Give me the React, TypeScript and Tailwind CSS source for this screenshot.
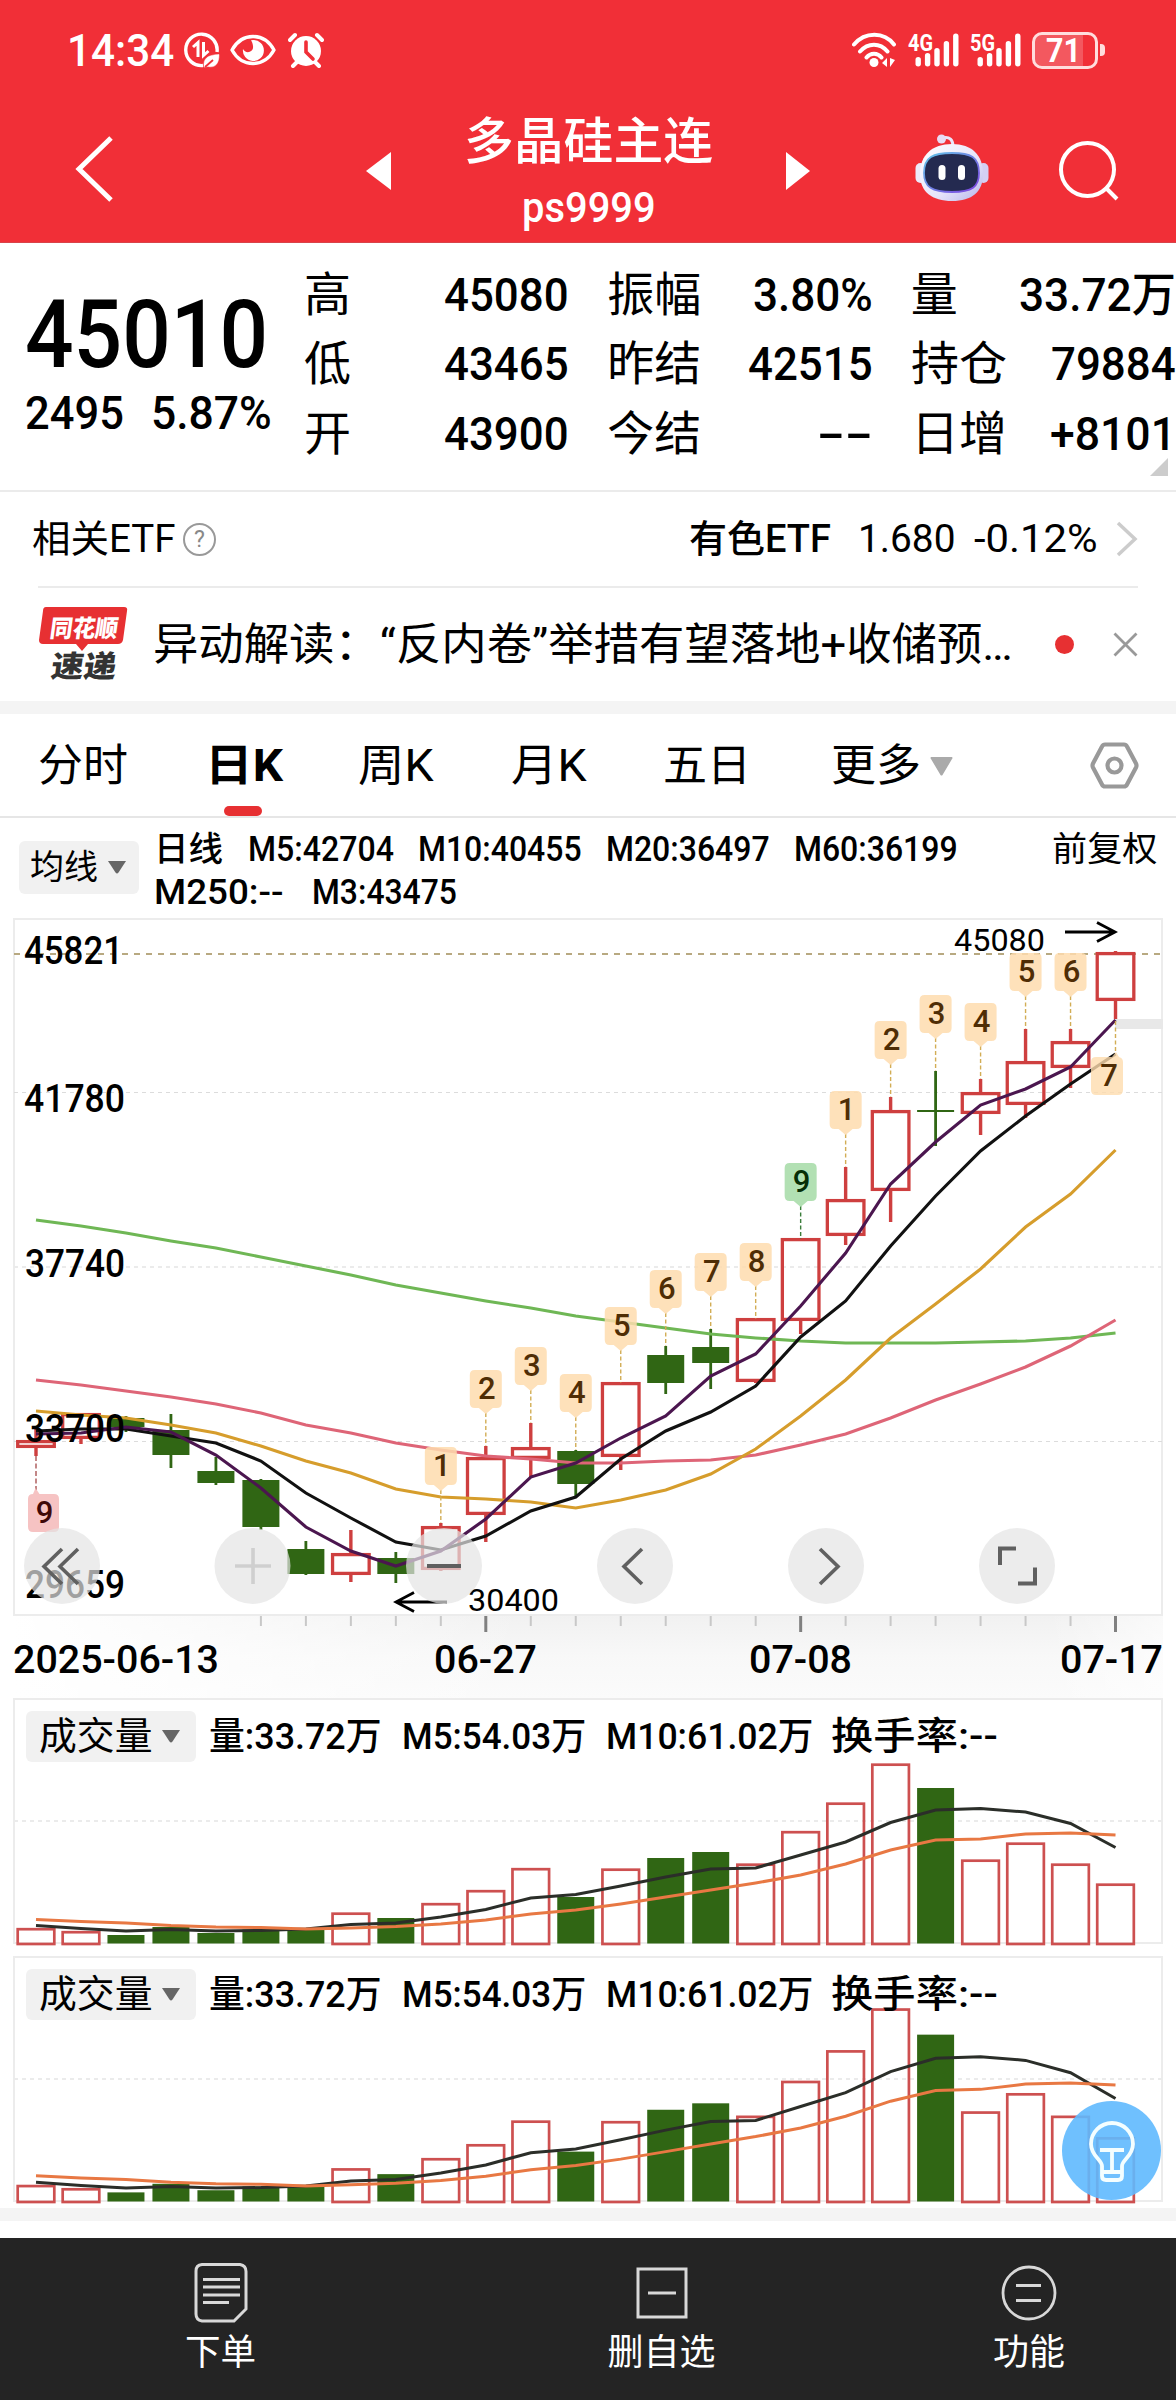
import React, { useLayoutEffect, useRef } from 'react';
import clsx from 'clsx';

// Candle describes one day: body top/bottom and wick high/low in chart units
interface Candle {
  up: boolean;
  top: number;
  bottom: number;
  high: number;
  low: number;
}

interface Badge {
  day: number;
  label: string;
  y: number;
}

const FIRST_X = 36;
const STEP = 44.98;
const dayX = (i: number) => FIRST_X + i * STEP;

const toCandle = ([up, top, bottom, high, low]: number[]): Candle => ({ up: up === 1, top, bottom, high, low });

const candles: Candle[] = [
  [1, 1440, 1448, 1428, 1456],
  [1, 1413, 1439, 1413, 1444],
  [0, 1418, 1427, 1416, 1432],
  [0, 1430, 1455, 1414, 1468],
  [0, 1471, 1483, 1457, 1485],
  [0, 1480, 1527, 1479, 1530],
  [0, 1549, 1574, 1541, 1575],
  [1, 1553, 1575, 1530, 1582],
  [0, 1558, 1574, 1552, 1583],
  [1, 1526, 1570, 1523, 1571],
  [1, 1457, 1515, 1446, 1542],
  [1, 1447, 1459, 1423, 1477],
  [0, 1451, 1484, 1450, 1496],
  [1, 1382, 1457, 1382, 1470],
  [0, 1355, 1383, 1346, 1394],
  [0, 1347, 1363, 1329, 1389],
  [1, 1318, 1382, 1318, 1383],
  [1, 1238, 1321, 1238, 1334],
  [1, 1199, 1236, 1167, 1245],
  [1, 1110, 1191, 1097, 1222],
  [0, 1110, 1112, 1071, 1146],
  [1, 1092, 1114, 1079, 1135],
  [1, 1061, 1105, 1029, 1118],
  [1, 1041, 1068, 1029, 1088],
  [1, 952, 1001, 951, 1019],
].map(toCandle);

const averages = [
  { color: '#6fb755', data: [1220, 1226, 1233, 1241, 1248, 1257, 1266, 1275, 1285, 1293, 1301, 1308, 1316, 1322, 1328, 1334, 1338, 1341, 1343, 1343, 1343, 1342, 1341, 1338, 1333] },
  { color: '#de6577', data: [1380, 1385, 1391, 1397, 1404, 1413, 1425, 1433, 1443, 1450, 1456, 1459, 1463, 1463, 1461, 1460, 1455, 1445, 1434, 1418, 1400, 1384, 1367, 1346, 1320] },
  { color: '#d69d2c', data: [1411, 1415, 1418, 1425, 1433, 1446, 1461, 1473, 1489, 1497, 1499, 1502, 1508, 1500, 1490, 1474, 1449, 1416, 1380, 1338, 1304, 1269, 1227, 1194, 1150] },
  { color: '#111111', data: [1431, 1429, 1429, 1436, 1443, 1461, 1493, 1518, 1542, 1550, 1536, 1511, 1497, 1459, 1431, 1412, 1386, 1337, 1301, 1246, 1196, 1151, 1116, 1084, 1054] },
  { color: '#4b164f', data: [1434, 1433, 1427, 1432, 1455, 1488, 1527, 1551, 1566, 1551, 1519, 1477, 1463, 1438, 1416, 1376, 1354, 1306, 1253, 1184, 1142, 1105, 1089, 1067, 1020] },
];

const badges: Badge[] = [
  { day: 9, label: '1', y: 1447 },
  { day: 10, label: '2', y: 1370 },
  { day: 11, label: '3', y: 1347 },
  { day: 12, label: '4', y: 1374 },
  { day: 13, label: '5', y: 1307 },
  { day: 14, label: '6', y: 1270 },
  { day: 15, label: '7', y: 1253 },
  { day: 16, label: '8', y: 1243 },
  { day: 17, label: '9', y: 1163 },
  { day: 18, label: '1', y: 1091 },
  { day: 19, label: '2', y: 1021 },
  { day: 20, label: '3', y: 995 },
  { day: 21, label: '4', y: 1003 },
  { day: 22, label: '5', y: 953 },
  { day: 23, label: '6', y: 953 },
];

// Volume heights above the base line
const volumes = [15.5, 12.5, 8.5, 16.5, 10.5, 14, 14, 31, 25.5, 40.5, 53.5, 75.5, 46.5, 75, 85.5, 91.5, 80, 112.5, 141, 180, 155.5, 84, 101, 80, 60];
const volumeFalls = [2, 3, 4, 5, 6, 8, 12, 14, 15, 20];
const volumeM5 = [18, 15, 12.5, 14, 12.5, 13, 14.5, 19, 20.5, 26.5, 34, 45.5, 49, 57.5, 66.5, 74.5, 75.5, 88.5, 101.5, 121, 133.5, 135, 131.5, 120, 96];
const volumeM10 = [24, 22, 20.5, 18, 16.5, 16, 14.5, 15.5, 17, 19.5, 23.5, 29.5, 33.5, 39.5, 46.5, 53.5, 60.5, 68.5, 79.5, 93.5, 103.5, 104.5, 109.5, 110.5, 108.5];

const quotes = [
  [['高', 'w-[47px]', '45080', 'w-[125px]'], ['振幅', 'w-[94px]', '3.80%', 'w-[120px]'], ['量', 'w-[47px]', '33.72万', 'w-[157px]']],
  [['低', 'w-[47px]', '43465', 'w-[125px]'], ['昨结', 'w-[94px]', '42515', 'w-[125px]'], ['持仓', 'w-[96px]', '79884', 'w-[125px]']],
  [['开', 'w-[47px]', '43900', 'w-[125px]'], ['今结', 'w-[94px]', '--', 'w-[56px]'], ['日增', 'w-[96px]', '+8101', 'w-[126px]']],
];

const points = (data: number[], y = (v: number) => v) => data.map((v, i) => `${dayX(i)},${y(v)}`).join(' ');

// Fit squeezes or stretches a single line of text to the width of its box
const Fit: React.FC<{ className: string; children: string }> = ({ className, children }) => {
  const ref = useRef<HTMLSpanElement>(null);

  useLayoutEffect(() => {
    const el = ref.current;
    if (!el || !el.parentElement) return;
    el.style.transform = `scaleX(${el.parentElement.clientWidth / el.offsetWidth})`;
  }, [children]);

  return (
    <span className={clsx('block shrink-0 leading-none', className)}>
      <span ref={ref} className="inline-block origin-left whitespace-nowrap leading-none align-top">{children}</span>
    </span>
  );
};

const Signal: React.FC<{ label: string }> = ({ label }) => (
  <svg className="overflow-visible" width="52" height="36" viewBox="0 0 52 36">
    <text x="0" y="19" fontSize="24" fontWeight="700" fill="#fff" textLength="25" lengthAdjust="spacingAndGlyphs">{label}</text>
    {[9.5, 13.5, 18.5, 25.5, 33].map((h, i) => (
      <rect key={i} x={7.5 + i * 9.4} y={34.5 - h} width="5.4" height={h} rx="2.7" fill="#fff" />
    ))}
  </svg>
);

const StatusBar = () => (
  <div className="flex h-[100px] items-center pl-[67px] pr-[71px]">
    <Fit className="w-[107px] text-[45px] font-medium">14:34</Fit>
    <svg className="ml-[10px]" width="36" height="36" viewBox="0 0 36 36" fill="none" stroke="#fff">
      <path d="M19 33.500A15.700 15.700 0 1 1 33 20" strokeWidth="3.400" />
      <path d="M9 15l5-4.500V25M19.500 10v13.500l5-4.500" strokeWidth="3" />
      <path d="M20 35c-1-9 4-12 15-12.500C35 32 31 36 24 34.500z" fill="#fff" strokeWidth="0.500" />
      <path d="M21 35l8-7" stroke="#f12f37" strokeWidth="1.800" />
    </svg>
    <svg className="ml-[10px]" width="46" height="32" viewBox="0 0 46 32">
      <path d="M2 16C12-2 34-2 44 16 34 34 12 34 2 16z" fill="none" stroke="#fff" strokeWidth="3.400" strokeLinejoin="round" />
      <path d="M23 6a10.500 10.500 0 1 1-10 9c2 5 11 4 10-3-.3-3-1-4-2-5.800z" fill="#fff" />
    </svg>
    <svg className="ml-[12px]" width="36" height="36" viewBox="0 0 36 36">
      <circle cx="18" cy="19" r="15" fill="#fff" />
      <path d="M2 8l5-5M34 8l-5-5M5 34l5-5M31 34l-5-5" stroke="#fff" strokeWidth="4" strokeLinecap="round" />
      <path d="M18 10v10l7 7" fill="none" stroke="#f12f37" strokeWidth="3.600" strokeLinecap="round" />
    </svg>
    <svg className="ml-auto mr-[11px]" width="45" height="36" viewBox="0 0 45 36" fill="none" stroke="#fff" strokeWidth="4" strokeLinecap="round">
      <path d="M2 12.500c11-13 30-13 40 0M8 19.500c8-9 20-9 27.500 0M14.500 25.500c4-5 11-5 15 0" />
      <circle cx="22" cy="30.500" r="4.500" fill="#fff" stroke="none" />
      <path d="M35 26v9l-5-4zM38 26v9l5-7z" fill="#fff" stroke="none" />
    </svg>
    <Signal label="4G" />
    <div className="w-[10px]" />
    <Signal label="5G" />
    <div className="relative ml-[10px] flex h-[37px] w-[66px] items-center rounded-[10px] border-[3px] border-[#fdd]">
      <div className="absolute inset-y-0 left-0 w-[48px] rounded-l-[7px] bg-white/20" />
      <Fit className="relative ml-[11px] w-[35px] text-[33px] font-bold text-white">71</Fit>
    </div>
    <div className="ml-[2px] h-[12px] w-[5px] rounded-r-[4px] bg-[#fdd]" />
  </div>
);

const Robot = () => (
  <svg width="74" height="68" viewBox="0 0 74 68">
    <defs>
      <linearGradient id="shell" x1="0" y1="0" x2="1" y2="1">
        <stop offset="0" stopColor="#ffffff" />
        <stop offset="0.6" stopColor="#e6e4fa" />
        <stop offset="1" stopColor="#b6b4ea" />
      </linearGradient>
      <linearGradient id="rim" x1="0" y1="0" x2="1" y2="1">
        <stop offset="0" stopColor="#62c6e8" />
        <stop offset="1" stopColor="#7d3fe0" />
      </linearGradient>
    </defs>
    <path d="M27 4c8-2 11 2 11 9" fill="none" stroke="#eae6fa" strokeWidth="3" />
    <circle cx="26.500" cy="5" r="4.500" fill="#e8dcf4" />
    <rect x="0.500" y="29" width="10" height="20" rx="5" fill="#eceafa" />
    <rect x="63.500" y="29" width="10" height="20" rx="5" fill="#d4cff4" />
    <path d="M37 10c20 0 31 11 31 30 0 18-11 27-31 27S5 58 5 40c0-19 12-30 32-30z" fill="url(#shell)" />
    <path d="M37 19c19 0 27 4 27 20 0 14-7 19-27 19S9 53 9 39c0-16 9-20 28-20z" fill="#242a50" stroke="url(#rim)" strokeWidth="1.800" />
    <rect x="23.500" y="31" width="7" height="15" rx="3.500" fill="#fff" />
    <rect x="43" y="31" width="7" height="15" rx="3.500" fill="#fff" />
  </svg>
);

const TitleBar = () => (
  <div className="flex h-[143px] pl-[75px] pr-[55px]">
    <svg className="mt-[36px]" width="40" height="66" viewBox="0 0 40 66" fill="none" stroke="#fff" strokeWidth="5">
      <path d="M36 2L4 33l32 31" />
    </svg>
    <svg className="ml-[251px] mt-[52px]" width="25" height="38" viewBox="0 0 25 38" fill="#fff">
      <path d="M25 0v38L0 19z" />
    </svg>
    <div className="ml-[73px] flex w-[249px] flex-col items-center text-white">
      <Fit className="mt-[17px] w-[249px] text-[50px] font-medium">多晶硅主连</Fit>
      <Fit className="mt-[20px] w-[134px] text-[42px] font-medium">ps9999</Fit>
    </div>
    <svg className="ml-[73px] mt-[52px]" width="24" height="38" viewBox="0 0 24 38" fill="#fff">
      <path d="M0 0v38l24-19z" />
    </svg>
    <div className="ml-[105px] mt-[34px]"><Robot /></div>
    <svg className="ml-[69px] mt-[40px]" width="62" height="61" viewBox="0 0 62 61" fill="none" stroke="#fff" strokeWidth="4">
      <circle cx="29.500" cy="29.500" r="26.500" />
      <path d="M48 48l11 11" />
    </svg>
  </div>
);

const QuotePanel = () => (
  <div className="relative flex h-[249px] border-b-2 border-[#ebebeb]">
    <div className="w-[304px] shrink-0 pl-[25px] font-medium">
      <Fit className="mt-[44px] w-[243px] text-[95px]">45010</Fit>
      <div className="mt-[7px] flex">
        <Fit className="w-[99px] text-[47px]">2495</Fit>
        <Fit className="ml-[27px] w-[121px] text-[47px]">5.87%</Fit>
      </div>
    </div>
    <div className="mt-[17px] grid h-[208px] w-[872px] grid-cols-3 grid-rows-3 gap-x-[38px]">
      {quotes.flat().map(([label, labelWidth, value, valueWidth]) => (
        <div key={label} className="flex items-center justify-between text-[47px]">
          <Fit className={labelWidth}>{label}</Fit>
          <Fit className={clsx('font-medium', valueWidth)}>{value}</Fit>
        </div>
      ))}
    </div>
    <svg className="absolute bottom-[14px] right-[8px]" width="18" height="18" viewBox="0 0 18 18">
      <path d="M18 0v18H0z" fill="#ccc" />
    </svg>
  </div>
);

const EtfRow = () => (
  <div className="ml-[38px] flex h-[96px] w-[1100px] items-center border-b-2 border-[#ebebeb] text-[38px]">
    <Fit className="-ml-[6px] w-[144px]">相关ETF</Fit>
    <div className="ml-[7px] flex size-[33px] items-center justify-center rounded-full border-2 border-[#999] text-[23px] leading-none text-[#888]">?</div>
    <Fit className="ml-auto w-[142px] font-medium">有色ETF</Fit>
    <Fit className="ml-[27px] w-[97px]">1.680</Fit>
    <Fit className="ml-[19px] w-[123px]">-0.12%</Fit>
    <svg className="ml-[19px]" width="22" height="36" viewBox="0 0 22 36" fill="none" stroke="#ccc" strokeWidth="3.500">
      <path d="M2 2l17 16L2 34" />
    </svg>
  </div>
);

const NewsRow = () => (
  <div className="flex h-[113px] items-center pl-[38px] pr-[38px]">
    <svg className="-mt-[1px] shrink-0" width="92" height="76" viewBox="0 0 92 76">
      <path d="M8 1h78q4 0 3 4l-4 29q-1 4-5 4H50l-6 7-6-7H5q-4 0-4-4L5 5q0-4 3-4z" fill="#e73032" />
      <text transform="translate(11 31) skewX(-8)" fontSize="24" fontWeight="900" fill="#fff" textLength="68" lengthAdjust="spacingAndGlyphs">同花顺</text>
      <text transform="translate(12 71) skewX(-8)" fontSize="30" fontWeight="900" fill="#333" textLength="65" lengthAdjust="spacingAndGlyphs">速递</text>
    </svg>
    <Fit className="ml-[23px] w-[860px] text-[44px]">异动解读：“反内卷”举措有望落地+收储预…</Fit>
    <div className="ml-auto size-[19px] rounded-full bg-[#e73032]" />
    <svg className="ml-[39px]" width="25" height="25" viewBox="0 0 25 25" stroke="#999" strokeWidth="2.800">
      <path d="M1.500 1.500l22 22M23.500 1.500l-22 22" />
    </svg>
  </div>
);

const Tabs = () => (
  <div className="flex h-[104px] items-center border-b-2 border-[#e6e6e6] pl-[38px] pr-[37px] pt-[2px] text-[44px]">
    <Fit className="w-[90px]">分时</Fit>
    <div className="relative ml-[77px] w-[78px]">
      <Fit className="w-[78px] font-bold">日K</Fit>
      <div className="absolute -bottom-[28px] left-[19px] h-[10px] w-[38px] rounded-full bg-[#e73032]" />
    </div>
    <Fit className="ml-[75px] w-[76px]">周K</Fit>
    <Fit className="ml-[77px] w-[76px]">月K</Fit>
    <Fit className="ml-[76px] w-[88px]">五日</Fit>
    <Fit className="ml-[80px] w-[90px]">更多</Fit>
    <svg className="ml-[9px]" width="23" height="19" viewBox="0 0 23 19"><path d="M1 0h21q1 1 0 2L12.500 18q-1 1-2 0L1 2q-1-1 0-2z" fill="#aaa" /></svg>
    <svg className="-mt-[1px] ml-auto" width="49" height="47" viewBox="0 0 49 47" fill="none" stroke="#999" strokeWidth="4.200">
      <path d="M15 2.500h19q2 0 3 2l9 17q1 2 0 4l-9 17q-1 2-3 2H15q-2 0-3-2l-9-17q-1-2 0-4l9-17q1-2 3-2z" />
      <circle cx="24.500" cy="23.500" r="7" />
    </svg>
  </div>
);

const Caret = () => (
  <svg width="18" height="13" viewBox="0 0 18 13"><path d="M0 0h18l-7.500 11.500q-1.500 2-3 0z" fill="#666" /></svg>
);

const AverageRow = () => (
  <div className="flex h-[101px] pl-[19px] pr-[18px] text-[34.500px]">
    <button className="mt-[24px] flex h-[53px] w-[120px] items-center justify-between rounded-[6px] bg-[#f1f1f1] pl-[11px] pr-[13px]">
      <Fit className="w-[68px]">均线</Fit>
      <Caret />
    </button>
    <div className="ml-[15px] mt-[11px] font-medium">
      <div className="flex h-[43px] items-center">
        <Fit className="w-[69px]">日线</Fit>
        <Fit className="ml-[25px] w-[146px]">M5:42704</Fit>
        <Fit className="ml-[24px] w-[164px]">M10:40455</Fit>
        <Fit className="ml-[24px] w-[164px]">M20:36497</Fit>
        <Fit className="ml-[24px] w-[164px]">M60:36199</Fit>
      </div>
      <div className="flex h-[43px] items-center gap-[28px]">
        <Fit className="w-[130px]">M250:--</Fit>
        <Fit className="w-[145px]">M3:43475</Fit>
      </div>
    </div>
    <div className="ml-auto mt-[11px] flex h-[43px] items-center">
      <Fit className="w-[106px]">前复权</Fit>
    </div>
  </div>
);

// ChartText draws a label whose glyphs fill the given width
const ChartText: React.FC<{ x: number; y: number; w: number; size?: number; weight?: number; children: string }> = ({ x, y, w, size = 38, weight = 500, children }) => (
  <text x={x} y={y} fontSize={size} fontWeight={weight} textLength={w} lengthAdjust="spacingAndGlyphs" fill="#000">{children}</text>
);

const DayBadge: React.FC<{ badge: Badge }> = ({ badge }) => {
  const x = dayX(badge.day);
  const nine = badge.label === '9';
  return (
    <g>
      <path d={`M${x} ${badge.y + 43}v33`} stroke={nine ? '#3a7d3a' : '#d2ad55'} strokeWidth="1.400" strokeDasharray="4 2.500" />
      <path
        d={`M${x - 11} ${badge.y}h22q5 0 5 5v28q0 5-5 5h-4l-7 6-7-6h-4q-5 0-5-5v-28q0-5 5-5z`}
        fill={nine ? '#a4dba6' : '#fedcae'}
        fillOpacity="0.850"
      />
      <text x={x + 1} y={badge.y + 29} fontSize="31" fontWeight="500" textAnchor="middle" fill={nine ? '#062e06' : '#4f2d05'}>{badge.label}</text>
    </g>
  );
};

const CandleChart = () => (
  <svg className="block shrink-0" width="1176" height="781" viewBox="0 918 1176 781">
    <defs>
      <linearGradient id="axisShade" x1="0" y1="0" x2="0" y2="1">
        <stop offset="0" stopColor="#f1f1f1" />
        <stop offset="0.500" stopColor="#f8f8f8" />
        <stop offset="1" stopColor="#fbfbfb" />
      </linearGradient>
      <linearGradient id="axisFade" x1="0" y1="0" x2="1" y2="0">
        <stop offset="0" stopColor="#fff" />
        <stop offset="0.450" stopColor="#fff" stopOpacity="0" />
        <stop offset="0.900" stopColor="#fff" stopOpacity="0" />
        <stop offset="1" stopColor="#fff" stopOpacity="0.600" />
      </linearGradient>
    </defs>
    <rect x="13" y="1615" width="1150" height="84" fill="url(#axisShade)" />
    <rect x="13" y="1615" width="1150" height="84" fill="url(#axisFade)" />
    <rect x="14" y="919" width="1148" height="696" fill="none" stroke="#ececec" strokeWidth="2" />
    <path d="M14 1092.500h1148M14 1441.500h1148" stroke="#dcdcdc" strokeDasharray="4 4" />
    <path d="M14 1267h1148" stroke="#ebebeb" strokeWidth="2" strokeDasharray="4 4" />
    <path d="M14 954h1148" stroke="#b8a981" strokeWidth="2" strokeDasharray="6 6" />
    <rect x="1115" y="1019" width="48" height="10" fill="#e8e8e8" />

    {candles.map((c, i) => {
      const x = dayX(i);
      const color = c.up ? '#ce3f3f' : '#306614';
      return (
        <g key={i}>
          <path d={`M${x} ${c.high}V${c.top}M${x} ${c.bottom}V${c.low}`} stroke={color} strokeWidth={c.up ? 3.4 : 2.8} />
          {c.up ? (
            <rect x={x - 18.3} y={c.top + 1.6} width="36.600" height={c.bottom - c.top - 3.2} fill="none" stroke={color} strokeWidth="3.300" />
          ) : (
            <rect x={x - 18.5} y={c.top} width="37" height={c.bottom - c.top} fill={color} />
          )}
        </g>
      );
    })}

    {averages.map((line) => (
      <polyline key={line.color} points={points(line.data)} fill="none" stroke={line.color} strokeWidth="3.100" />
    ))}

    <ChartText x={24} y={964} w={99}>45821</ChartText>
    <ChartText x={24} y={1112} w={101}>41780</ChartText>
    <ChartText x={25} y={1277} w={100}>37740</ChartText>
    <ChartText x={25} y={1442} w={100}>33700</ChartText>
    <ChartText x={25} y={1598} w={100}>29659</ChartText>

    {badges.map((badge) => <DayBadge key={badge.day} badge={badge} />)}

    {/* Buy signal on the first day, pending count on the last one */}
    <path d="M36 1456v34" stroke="#a55" strokeWidth="1.400" strokeDasharray="5 2.500" />
    <path d="M33 1494l2.500-6 4 6H54q5 0 5 5v28q0 5-5 5H33q-5 0-5-5v-28q0-5 5-5z" fill="#f5bcbc" fillOpacity="0.900" />
    <text x="44.500" y="1523" fontSize="31" fontWeight="500" textAnchor="middle" fill="#3f0808">9</text>
    <path d="M1115.500 1021v33" stroke="#d2ad55" strokeWidth="1.400" strokeDasharray="4 2.500" />
    <path d="M1096 1057h16l4-5 3 5q4 1 4 5v28q0 5-5 5h-22q-5 0-5-5v-28q0-5 5-5z" fill="#fedcae" fillOpacity="0.800" />
    <text x="1109" y="1086" fontSize="31" fontWeight="500" textAnchor="middle" fill="#4f2d05">7</text>

    <ChartText x={954} y={951} w={91} size={32} weight={400}>45080</ChartText>
    <path d="M1065 932h50M1097 922.500l18 9.500-18 9.500" fill="none" stroke="#000" strokeWidth="2.800" />
    <ChartText x={468} y={1611} w={91} size={32} weight={400}>30400</ChartText>
    <path d="M447 1602h-50M414 1592.500l-18 9.500 18 9.500" fill="none" stroke="#000" strokeWidth="2.800" />

    {candles.map((_, i) => {
      if (i < 5) return null;
      const major = i === 10 || i === 17 || i === 24;
      return <path key={i} d={`M${dayX(i)} 1616v${major ? 16 : 10}`} stroke={major ? '#808080' : '#c8c8c8'} strokeWidth={major ? 3 : 2} />;
    })}
    <ChartText x={13} y={1673} w={206}>2025-06-13</ChartText>
    <ChartText x={434} y={1673} w={103}>06-27</ChartText>
    <ChartText x={749} y={1673} w={103}>07-08</ChartText>
    <ChartText x={1060} y={1673} w={103}>07-17</ChartText>

    {/* Floating controls */}
    {[62, 252.5, 444, 635, 826, 1017].map((x) => (
      <circle key={x} cx={x} cy="1566" r="38" fill="#e4e4e4" fillOpacity="0.700" />
    ))}
    <g fill="none" stroke="#606060" strokeWidth="3.600">
      <path d="M62 1549l-18 17.500 18 17.500M78 1549l-18 17.500 18 17.500" />
      <path d="M235 1566h36M253 1548v36" stroke="#cfcfcf" />
      <path d="M427 1566h34" strokeWidth="4" />
      <path d="M642 1549l-18 17.500 18 17.500" />
      <path d="M820 1549l18 17.500-18 17.500" />
      <path d="M1000 1565v-16.500h16M1035 1567.500v16h-17" strokeWidth="4" />
    </g>
  </svg>
);

const VolumePanel: React.FC<{ scale: number; grid: number }> = ({ scale, grid }) => {
  const y = (v: number) => 245.5 - v * scale;
  return (
    <div className="relative h-[246px]">
      <svg className="absolute inset-0" width="1176" height="248" viewBox="0 0 1176 248">
        <rect x="14" y="1" width="1148" height="244" fill="none" stroke="#ececec" strokeWidth="2" />
        <path d={`M14 ${grid}h1148`} stroke="#ebebeb" strokeWidth="2" strokeDasharray="4 4" />
        {volumes.map((v, i) =>
          volumeFalls.includes(i) ? (
            <rect key={i} x={dayX(i) - 18.5} y={y(v)} width="37" height={v * scale} fill="#306614" />
          ) : (
            <rect key={i} x={dayX(i) - 18.3} y={y(v) + 1.2} width="36.600" height={v * scale - 0.7} fill="none" stroke="#cd5050" strokeWidth="2.700" />
          )
        )}
        <polyline points={points(volumeM5, y)} fill="none" stroke="#2b2e29" strokeWidth="3" />
        <polyline points={points(volumeM10, y)} fill="none" stroke="#e87843" strokeWidth="3" />
      </svg>
      <div className="relative flex items-center pl-[26px] pt-[13px] text-[37.500px]">
        <button className="mr-[13px] flex h-[51px] w-[170px] items-center justify-between rounded-[6px] bg-[#f1f1f1] pl-[12px] pr-[16px]">
          <Fit className="w-[114px]">成交量</Fit>
          <Caret />
        </button>
        <div className="flex font-medium">
          <Fit className="w-[173px]">量:33.72万</Fit>
          <Fit className="ml-[20px] w-[184px]">M5:54.03万</Fit>
          <Fit className="ml-[20px] w-[207px]">M10:61.02万</Fit>
          <Fit className="ml-[18px] w-[167px]">换手率:--</Fit>
        </div>
      </div>
    </div>
  );
};

const BottomNav = () => (
  <div className="flex h-[162px] bg-[#242424] text-[36px] text-white">
    <div className="flex w-[441px] flex-col items-center pt-[25px]">
      <svg width="54" height="60" viewBox="0 0 54 60" fill="none" stroke="#d8d8d8" strokeWidth="3">
        <path d="M8 1.500h38q6 1 6 7V46L40 58H8q-6-1-6-7V8q0-6 6-6.500z" />
        <path d="M9 16.500h37M9 24h37M9 32h37M9 39.500h26" />
      </svg>
      <Fit className="mt-[12px] w-[71px]">下单</Fit>
    </div>
    <div className="flex w-[441px] flex-col items-center pt-[29px]">
      <svg width="52" height="52" viewBox="0 0 52 52" fill="none" stroke="#d8d8d8" strokeWidth="3">
        <path d="M2 2h48v48H2zM12 26h28" />
      </svg>
      <Fit className="mt-[16px] w-[108px]">删自选</Fit>
    </div>
    <div className="flex w-[294px] flex-col items-center pt-[27px]">
      <svg width="56" height="56" viewBox="0 0 56 56" fill="none" stroke="#d8d8d8" strokeWidth="2.800">
        <circle cx="28" cy="28" r="26" />
        <path d="M15 20.500h25M15 35.500h25" />
      </svg>
      <Fit className="mt-[14px] w-[72px]">功能</Fit>
    </div>
  </div>
);

const App: React.FC = () => {
  return (
    <div lang="zh-CN" className="relative flex h-[2400px] w-[1176px] flex-col overflow-hidden bg-white font-[Roboto,'Noto_Sans_CJK_SC',sans-serif] text-black">
      <header className="h-[243px] shrink-0 border-b border-[#d8444a] bg-[#f12f37] text-white">
        <StatusBar />
        <TitleBar />
      </header>
      <QuotePanel />
      <EtfRow />
      <NewsRow />
      <div className="h-[13px] shrink-0 bg-[#f4f4f4]" />
      <div className="h-[103px] shrink-0"><Tabs /></div>
      <AverageRow />
      <CandleChart />
      <div className="-mt-px"><VolumePanel scale={1} grid={123} /></div>
      <div className="mt-[12px]"><VolumePanel scale={1.073} grid={123} /></div>
      <div className="mt-[6px] h-[13px] shrink-0 bg-[#f4f4f4]" />
      <div className="mt-auto"><BottomNav /></div>

      {/* Tips button floats over the lower volume chart */}
      <button className="absolute right-[15px] top-[2101px] flex size-[99px] items-center justify-center rounded-full bg-[#5fb9fe]/90">
        <svg width="48" height="66" viewBox="0 0 48 66" fill="none" stroke="#f4feff" strokeWidth="3.800" strokeLinejoin="round">
          <path d="M14 58V48c0-6-11-10-11-22a21 21 0 0 1 42 0c0 12-11 16-11 22v10q0 4-4 4H18q-4 0-4-4z" />
          <path d="M12 32h24M24 32v22M14 54h20" />
        </svg>
      </button>
    </div>
  );
};

export default App;
